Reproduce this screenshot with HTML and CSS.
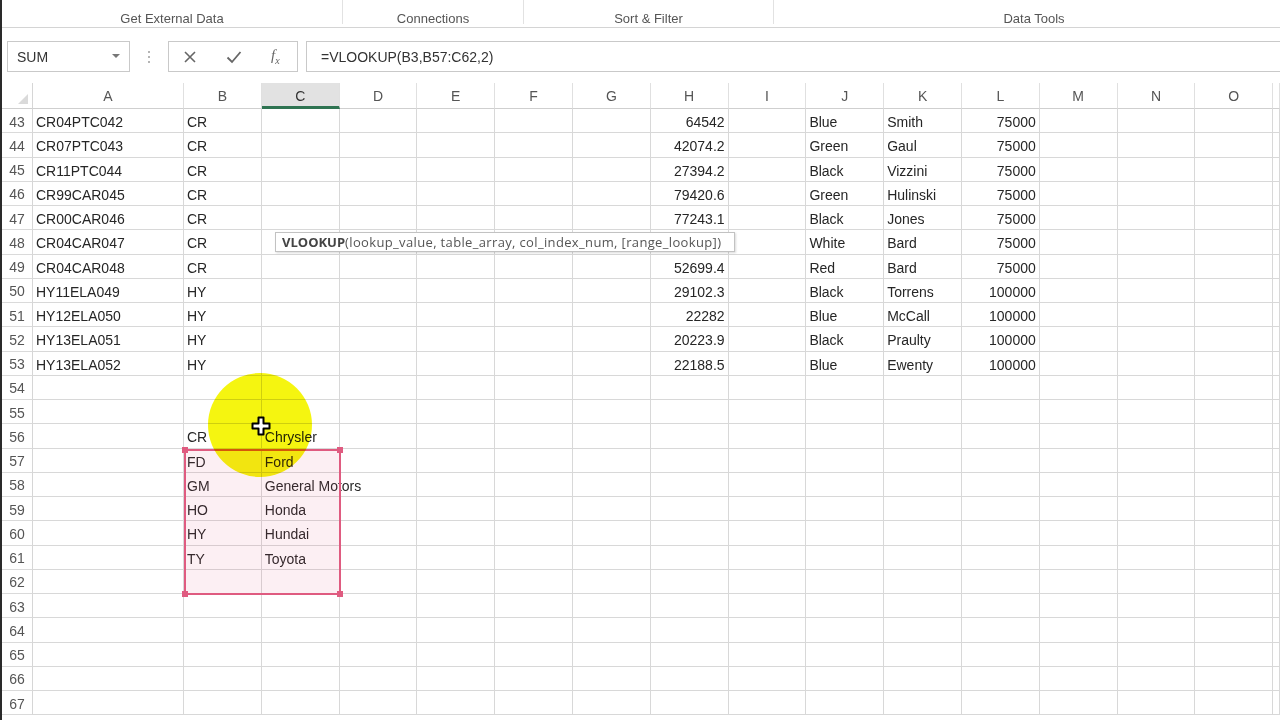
FILE: index.html
```html
<!DOCTYPE html>
<html>
<head>
<meta charset="utf-8">
<link rel="stylesheet" href="styles.css">
</head>
<body>
<div class="app">
  <div class="ribbon">
    <div class="grp g1">Get External Data</div>
    <div class="grp g2">Connections</div>
    <div class="grp g3">Sort &amp; Filter</div>
    <div class="grp g4">Data Tools</div>
  </div>
  <div class="fbar">
    <div class="namebox"><span>SUM</span><span class="ddarrow"></span></div>
    <div class="grip"><i></i><i></i><i></i></div>
    <div class="btns">
      <svg class="ico" width="14" height="14" viewBox="0 0 14 14"><path d="M2 2 L12 12 M12 2 L2 12" stroke="#666" stroke-width="1.6" fill="none"/></svg>
      <svg class="ico" width="16" height="14" viewBox="0 0 16 14"><path d="M1.5 7.5 L6 12 L14.5 2" stroke="#666" stroke-width="1.8" fill="none"/></svg>
      <span class="fx">f<sub>x</sub></span>
    </div>
    <div class="formula">=VLOOKUP(B3,B57:C62,2)</div>
  </div>
  <div class="sheet">
    <div class="row head">
      <div class="rh corner"><span class="tri"></span></div>
      <div class="c ca">A</div><div class="c">B</div><div class="c sel">C</div><div class="c">D</div><div class="c">E</div><div class="c">F</div><div class="c">G</div><div class="c">H</div><div class="c">I</div><div class="c">J</div><div class="c">K</div><div class="c">L</div><div class="c">M</div><div class="c">N</div><div class="c">O</div><div class="c last"></div>
    </div>
    <div id="rows"></div>
    <div class="selbox"><i class="h tl"></i><i class="h tr"></i><i class="h bl"></i><i class="h br"></i></div>
    <div class="spot"></div>
    <div class="tip"><b>VLOOKUP</b>(lookup_value, table_array, col_index_num, [range_lookup])</div>
    <svg class="cursor" width="20" height="20" viewBox="0 0 20 20"><path d="M7.5 1.5 h5 v6 h6 v5 h-6 v6 h-5 v-6 h-6 v-5 h6 z" fill="#fff" stroke="#000" stroke-width="2" stroke-linejoin="round"/></svg>
  </div>
</div>
<script src="script.js"></script>
</body>
</html>
```
FILE: styles.css
```css
* { box-sizing: border-box; }
html, body { margin: 0; padding: 0; background: #fff; }
body { font-family: "Liberation Sans", Arial, sans-serif; overflow: hidden; }
.app { width: 1280px; height: 720px; border-left: 2px solid #2a2a2a; overflow: hidden; position: relative; }

.ribbon { height: 28px; display: flex; border-bottom: 1px solid #d4d4d4; background: #fff; }
.grp { flex: none; font-size: 13px; color: #555; text-align: center; padding-top: 11px; border-right: 1px solid #e2e2e2; height: 24px; }
.g1 { width: 341px; }
.g2 { width: 181px; }
.g3 { width: 250px; }
.g4 { width: 520px; border-right: none; }

.fbar { height: 55px; display: flex; align-items: flex-start; padding-top: 13px; background: #fff; }
.namebox { width: 123px; height: 31px; margin-left: 5px; border: 1px solid #c9c9c9; display: flex; align-items: center; justify-content: space-between; padding: 1px 9px 0 9px; font-size: 14px; color: #333; }
.ddarrow { width: 0; height: 0; border-left: 4px solid transparent; border-right: 4px solid transparent; border-top: 4px solid #777; margin-top: -2px; }
.grip { width: 38px; height: 31px; display: flex; flex-direction: column; align-items: center; justify-content: center; gap: 3px; }
.grip i { width: 2px; height: 2px; background: #b5b5b5; }
.btns { width: 130px; height: 31px; border: 1px solid #c9c9c9; display: flex; align-items: center; justify-content: flex-start; gap: 29px; padding: 0 0 0 14px; }
.fx { font-family: "Liberation Serif", serif; font-style: italic; font-size: 15px; color: #666; }
.fx sub { font-size: 10px; }
.formula { flex: 1; height: 31px; margin-left: 8px; border: 1px solid #c9c9c9; border-right: none; font-size: 14px; color: #333; padding: 7px 0 0 14px; }

.sheet { position: relative; }
.row { display: flex; height: 24.25px; }
.row.head { height: 26px; }
.rh { width: 31px; flex: none; border-right: 1px solid #d6d6d6; border-bottom: 1px solid #dadada; font-size: 14px; color: #555; display: flex; align-items: center; justify-content: center; padding-top: 2px; background: #fff; }
.c { width: 77.8px; flex: none; border-right: 1px solid #d8d8d8; border-bottom: 1px solid #d8d8d8; font-size: 14px; color: #262626; padding: 4px 3px 0 3px; white-space: nowrap; overflow: visible; line-height: 18px; }
.c.ca { width: 151px; }
.c.last { flex: 1; width: auto; }
.c.n { text-align: right; }
.head .c { text-align: center; color: #555; padding-top: 4px; background: #fff; border-bottom: 1px solid #cfcfcf; border-right: 1px solid #e0e0e0; }
.head .c.sel { background: #e2e2e2; color: #333; border-bottom: 3px solid #2f7452; }
.corner { position: relative; border-bottom: 1px solid #cfcfcf; }
.tri { position: absolute; right: 4px; bottom: 4px; width: 0; height: 0; border-left: 10px solid transparent; border-bottom: 10px solid #dadada; }

.selbox { position: absolute; left: 182px; top: 365.5px; width: 157px; height: 146px; border: 2px solid #df5b80; background: rgba(225, 80, 120, 0.09); pointer-events: none; }
.h { position: absolute; width: 6px; height: 6px; background: #df5b80; }
.tl { left: -4px; top: -4px; }
.tr { right: -4px; top: -4px; }
.bl { left: -4px; bottom: -4px; }
.br { right: -4px; bottom: -4px; }

.spot { position: absolute; left: 206px; top: 290px; width: 104px; height: 104px; border-radius: 50%; background: #f5f510; mix-blend-mode: multiply; }
.tip { position: absolute; left: 273px; top: 149px; width: 460px; height: 20px; background: #fff; border: 1px solid #c2c2c2; box-shadow: 1px 1px 2px rgba(0,0,0,0.15); font-family: "Open Sans", "Liberation Sans", sans-serif; font-size: 13px; letter-spacing: 0.35px; color: #555; padding: 1px 0 0 6px; white-space: nowrap; line-height: 17px; }
.tip b { color: #444; font-weight: 700; letter-spacing: 0; }
.cursor { position: absolute; left: 249px; top: 333px; }
```
FILE: script.js
```js
var data = [
  [43, "CR04PTC042", "CR", "", "64542", "Blue", "Smith", "75000"],
  [44, "CR07PTC043", "CR", "", "42074.2", "Green", "Gaul", "75000"],
  [45, "CR11PTC044", "CR", "", "27394.2", "Black", "Vizzini", "75000"],
  [46, "CR99CAR045", "CR", "", "79420.6", "Green", "Hulinski", "75000"],
  [47, "CR00CAR046", "CR", "", "77243.1", "Black", "Jones", "75000"],
  [48, "CR04CAR047", "CR", "", "", "White", "Bard", "75000"],
  [49, "CR04CAR048", "CR", "", "52699.4", "Red", "Bard", "75000"],
  [50, "HY11ELA049", "HY", "", "29102.3", "Black", "Torrens", "100000"],
  [51, "HY12ELA050", "HY", "", "22282", "Blue", "McCall", "100000"],
  [52, "HY13ELA051", "HY", "", "20223.9", "Black", "Praulty", "100000"],
  [53, "HY13ELA052", "HY", "", "22188.5", "Blue", "Ewenty", "100000"],
  [54, "", "", "", "", "", "", ""],
  [55, "", "", "", "", "", "", ""],
  [56, "", "CR", "Chrysler", "", "", "", ""],
  [57, "", "FD", "Ford", "", "", "", ""],
  [58, "", "GM", "General Motors", "", "", "", ""],
  [59, "", "HO", "Honda", "", "", "", ""],
  [60, "", "HY", "Hundai", "", "", "", ""],
  [61, "", "TY", "Toyota", "", "", "", ""],
  [62, "", "", "", "", "", "", ""],
  [63, "", "", "", "", "", "", ""],
  [64, "", "", "", "", "", "", ""],
  [65, "", "", "", "", "", "", ""],
  [66, "", "", "", "", "", "", ""],
  [67, "", "", "", "", "", "", ""]
];
var host = document.getElementById("rows");
var html = "";
data.forEach(function (r) {
  var cells = [
    ["ca", r[1]], ["", r[2]], ["", r[3]], ["", ""], ["", ""], ["", ""], ["", ""],
    ["n", r[4]], ["", ""], ["", r[5]], ["", r[6]], ["n", r[7]], ["", ""], ["", ""], ["", ""], ["last", ""]
  ];
  html += '<div class="row"><div class="rh">' + r[0] + '</div>';
  cells.forEach(function (c) {
    html += '<div class="c ' + c[0] + '">' + c[1] + '</div>';
  });
  html += '</div>';
});
host.innerHTML = html;
```
